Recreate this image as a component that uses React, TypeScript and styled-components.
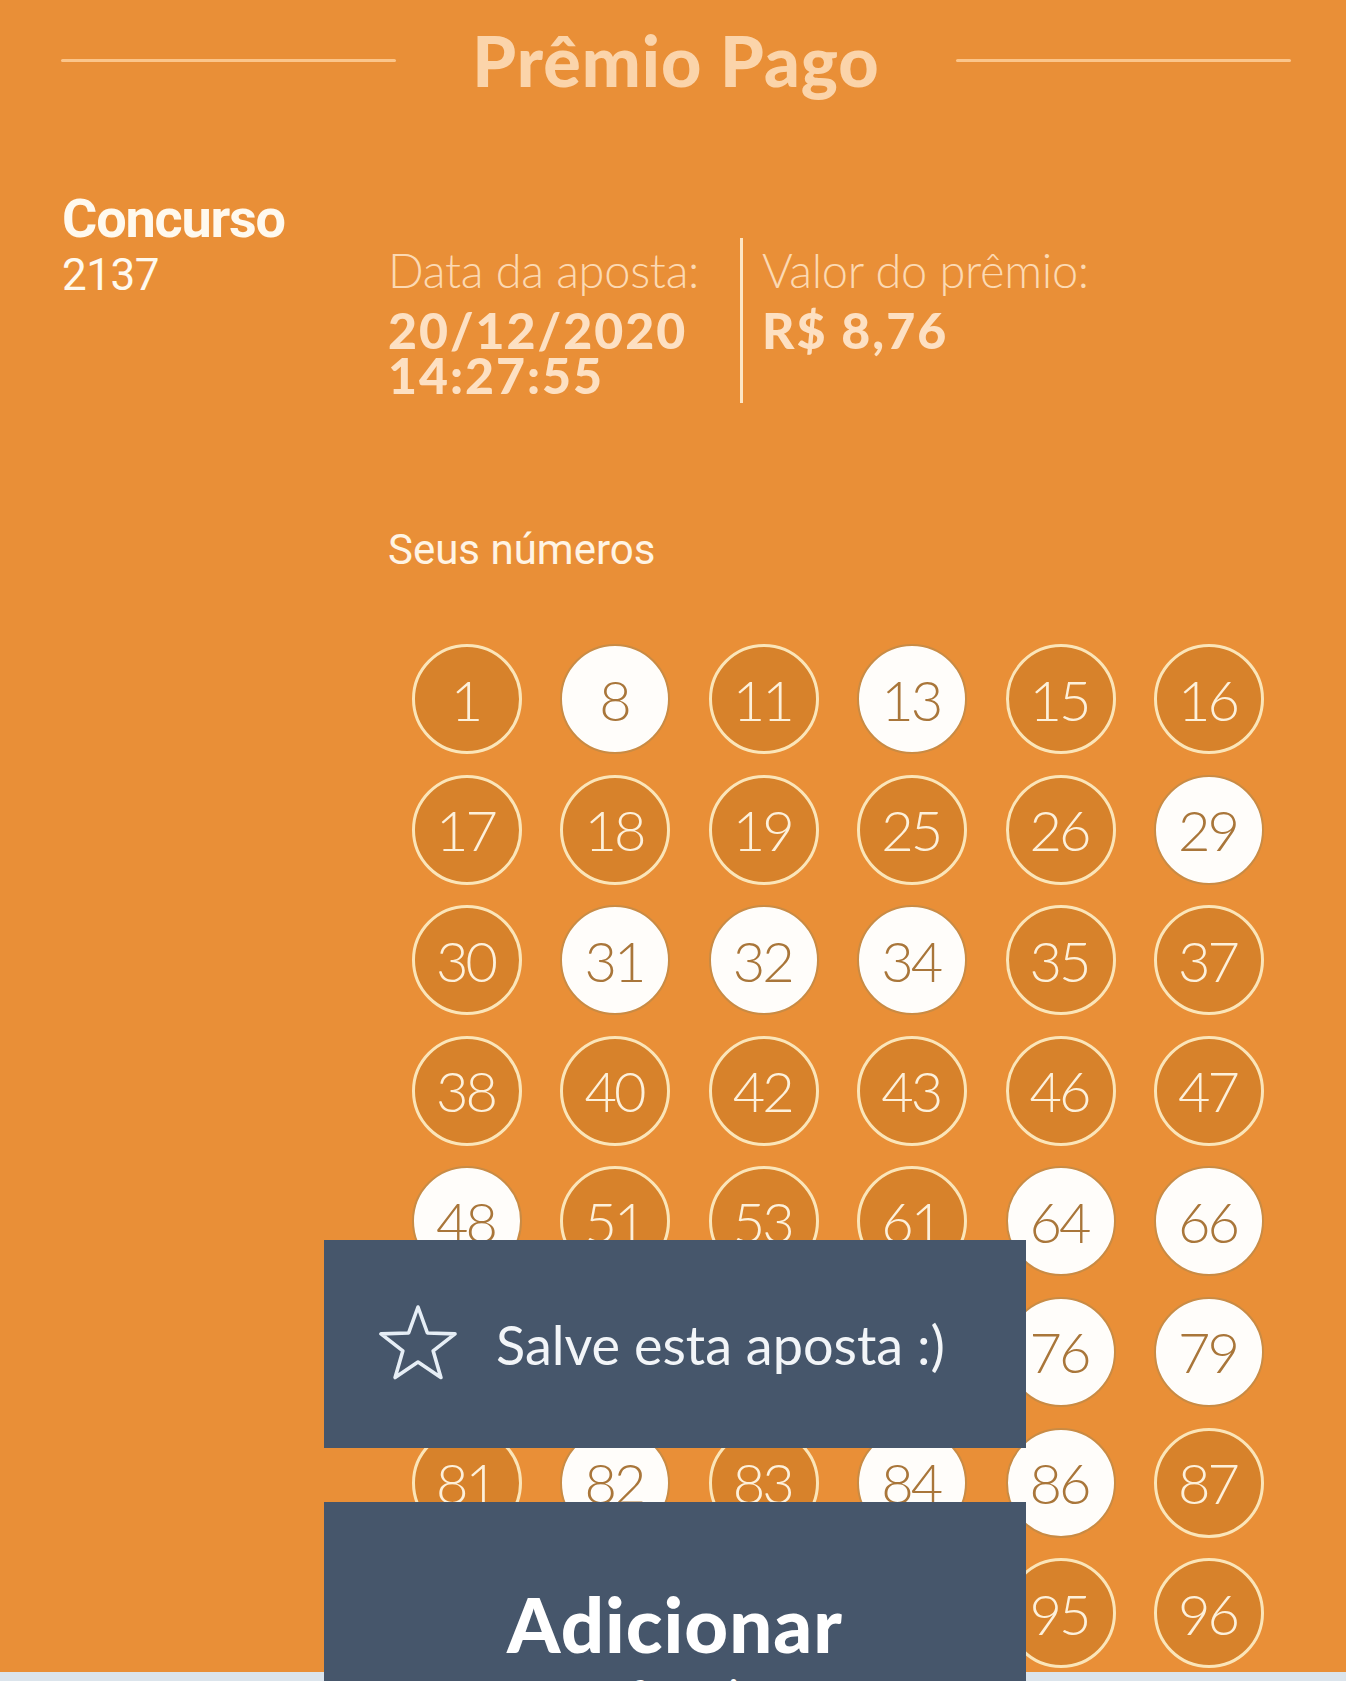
import styled, { createGlobalStyle } from 'styled-components';

const GlobalStyle = createGlobalStyle`
  html, body {
    margin: 0;
    padding: 0;
    background: #e98f37;
  }
  body {
    font-family: Lato, "Noto Sans", sans-serif;
  }
`;

type Ball = { n: number; hit: boolean };

const rows: [number, boolean][][] = [
  [[1, false], [8, true], [11, false], [13, true], [15, false], [16, false]],
  [[17, false], [18, false], [19, false], [25, false], [26, false], [29, true]],
  [[30, false], [31, true], [32, true], [34, true], [35, false], [37, false]],
  [[38, false], [40, false], [42, false], [43, false], [46, false], [47, false]],
  [[48, true], [51, false], [53, false], [61, false], [64, true], [66, true]],
  [[67, false], [69, true], [71, false], [73, false], [76, true], [79, true]],
  [[81, false], [82, true], [83, false], [84, true], [86, true], [87, false]],
  [[88, false], [90, false], [92, true], [94, false], [95, false], [96, false]],
];

const balls: Ball[] = rows.flat().map(([n, hit]) => ({ n, hit }));

const StarIcon = () => (
  <svg width="80" height="78" viewBox="0 0 80 78" fill="none">
    <polygon
      points="40,2 49.4,28 77,28.9 55.2,45.9 62.9,72.5 40,57 17.1,72.5 24.8,45.9 3,28.9 30.6,28"
      stroke="#e6eef6"
      strokeWidth="3.6"
      strokeLinejoin="round"
    />
  </svg>
);

const App = () => {
  return (
    <>
      <GlobalStyle />
      <Page>
        <Content>
          <Header>
            <Line />
            <Title>Prêmio Pago</Title>
            <Line />
          </Header>

          <InfoRow>
            <Contest>
              <ContestLabel>Concurso</ContestLabel>
              <ContestNumber>2137</ContestNumber>
            </Contest>
            <Details>
              <DetailCol width={352}>
                <DetailLabel>Data da aposta:</DetailLabel>
                <DetailValue>20/12/2020<br />14:27:55</DetailValue>
              </DetailCol>
              <Divider />
              <DetailCol>
                <DetailLabel>Valor do prêmio:</DetailLabel>
                <DetailValue>R$ 8,76</DetailValue>
              </DetailCol>
            </Details>
          </InfoRow>

          <NumbersLabel>Seus números</NumbersLabel>

          <BallGrid>
            {balls.map(b => (
              <BallItem key={b.n} hit={b.hit}>{b.n}</BallItem>
            ))}
          </BallGrid>
        </Content>
        <Footer />

        <SaveToast>
          <StarIcon />
          <ToastText>Salve esta aposta :)</ToastText>
        </SaveToast>

        <AddSheet>
          <AddTitle>Adicionar</AddTitle>
          <AddSub>aos favoritos</AddSub>
        </AddSheet>
      </Page>
    </>
  );
};

export default App;

const Page = styled.div`
  position: relative;
  width: 1346px;
  height: 1681px;
  overflow: hidden;
  display: flex;
  flex-direction: column;
  background: #e98f37;
`

const Content = styled.div`
  flex: 1;
  overflow: hidden;
`

const Footer = styled.div`
  height: 9px;
  background: #dbe4ec;
`

const Header = styled.div`
  display: flex;
  align-items: center;
  padding: 20px 55px 0 61px;
  height: 80px;
`

const Line = styled.div`
  flex: 1;
  height: 3px;
  border-radius: 2px;
  background: #fbc58a;
`

const Title = styled.h1`
  margin: 0 76px;
  font-family: Lato, sans-serif;
  font-weight: 900;
  font-size: 70px;
  line-height: 80px;
  color: #fbd4aa;
  letter-spacing: 1px;
`

const InfoRow = styled.div`
  display: flex;
  align-items: flex-start;
  padding: 90px 0 0 62px;
`

const Contest = styled.div`
  width: 326px;
  font-family: Roboto, "Liberation Sans", sans-serif;
  color: #fff9ee;
`

const ContestLabel = styled.div`
  font-weight: 700;
  font-size: 54px;
  line-height: 58px;
  letter-spacing: -1.2px;
`

const ContestNumber = styled.div`
  margin-top: 2px;
  font-weight: 400;
  font-size: 44px;
  line-height: 50px;
  letter-spacing: -0.5px;
`

const Details = styled.div`
  display: flex;
  align-items: flex-start;
  margin-top: 48px;
`

const DetailCol = styled.div<{ width?: number }>`
  width: ${p => (p.width ? `${p.width}px` : 'auto')};
  padding-left: ${p => (p.width ? '0' : '19px')};
  color: #fcd9b2;
`

const DetailLabel = styled.div`
  margin-top: 4px;
  font-family: Lato, sans-serif;
  font-weight: 300;
  font-size: 47px;
  line-height: 56px;
  letter-spacing: -0.3px;
`

const DetailValue = styled.div`
  margin-top: 10px;
  font-family: Lato, sans-serif;
  font-weight: 900;
  font-size: 50px;
  line-height: 45px;
  letter-spacing: 2px;
  color: #fde0c2;
`

const Divider = styled.div`
  width: 3px;
  height: 165px;
  background: #fde6c4;
`

const NumbersLabel = styled.div`
  padding: 122px 0 0 388px;
  font-family: Roboto, "Liberation Sans", sans-serif;
  font-size: 42px;
  line-height: 50px;
  color: #fff4e4;
`

const BallGrid = styled.div`
  display: grid;
  grid-template-columns: repeat(6, 110px);
  column-gap: 38.4px;
  row-gap: 20.6px;
  padding: 69px 0 0 412px;
`

const BallItem = styled.div<{ hit: boolean }>`
  box-sizing: border-box;
  width: 110px;
  height: 110px;
  border-radius: 50%;
  display: flex;
  align-items: center;
  justify-content: center;
  font-family: Lato, sans-serif;
  font-weight: 300;
  font-size: 56px;
  letter-spacing: -3px;
  padding-right: 3px;
  background: ${p => (p.hit ? '#fffdfa' : '#d7822b')};
  color: ${p => (p.hit ? '#a9763a' : '#fdf0da')};
  border: ${p => (p.hit ? '2px solid #c98b44' : '3px solid #fbe5b8')};
`

const SaveToast = styled.div`
  position: absolute;
  left: 324px;
  top: 1240px;
  width: 702px;
  height: 208px;
  box-sizing: border-box;
  padding-left: 54px;
  display: flex;
  align-items: center;
  gap: 38px;
  background: #46566b;
`

const ToastText = styled.span`
  font-family: Lato, sans-serif;
  font-weight: 400;
  font-size: 54px;
  color: #f2f5f8;
`

const AddSheet = styled.div`
  position: absolute;
  left: 324px;
  top: 1502px;
  width: 702px;
  height: 200px;
  display: flex;
  flex-direction: column;
  align-items: center;
  padding-top: 80px;
  box-sizing: border-box;
  background: #46566b;
  color: #ffffff;
`

const AddTitle = styled.div`
  font-family: Lato, sans-serif;
  font-weight: 900;
  font-size: 76px;
  line-height: 84px;
  letter-spacing: 1px;
`

const AddSub = styled.div`
  margin-top: 4px;
  font-family: Lato, sans-serif;
  font-weight: 400;
  font-size: 44px;
  line-height: 50px;
`
